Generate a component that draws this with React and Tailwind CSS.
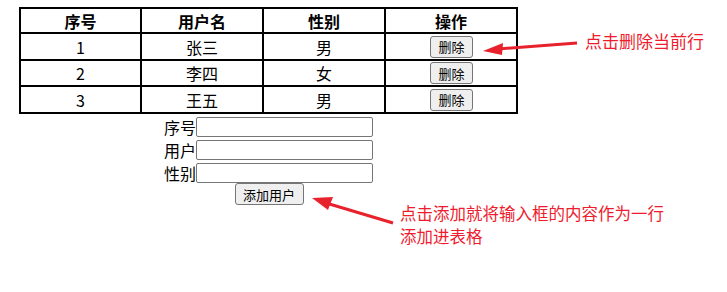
import React from "react";

const rows = [
  { id: 1, name: "张三", sex: "男" },
  { id: 2, name: "李四", sex: "女" },
  { id: 3, name: "王五", sex: "男" },
];

const font = { fontFamily: '"Noto Sans CJK SC", "Noto Sans", sans-serif' };

function Btn({ children, className = "" }) {
  return (
    <button
      className={
        "bg-[#efefef] border border-[#767676] rounded-[3px] text-[13px] leading-none text-black flex items-center justify-center " +
        className
      }
      style={font}
    >
      {children}
    </button>
  );
}

export default function App() {
  return (
    <div className="relative w-[727px] h-[292px] bg-white text-black" style={font}>
      <div className="pt-[7px] pl-[19px]">
        <table className="w-[499px] border-collapse border-2 border-black text-[16px] leading-none">
          <thead>
            <tr className="h-[25px]">
              <th className="border-2 border-black w-[121px] font-bold">序号</th>
              <th className="border-2 border-black w-[122px] font-bold">用户名</th>
              <th className="border-2 border-black w-[122px] font-bold">性别</th>
              <th className="border-2 border-black font-bold">操作</th>
            </tr>
          </thead>
          <tbody>
            {rows.map((r, i) => (
              <tr key={r.id} className={i === 1 ? "h-[26px]" : "h-[27px]"}>
                <td className="border-2 border-black text-center font-normal">{r.id}</td>
                <td className="border-2 border-black text-center">{r.name}</td>
                <td className="border-2 border-black text-center">{r.sex}</td>
                <td className="border-2 border-black">
                  <div className="flex justify-center pl-[1px]">
                    <Btn className="w-[43px] h-[22px]">删除</Btn>
                  </div>
                </td>
              </tr>
            ))}
          </tbody>
        </table>

        <div className="w-[499px] flex flex-col items-center pt-[1px]">
          {["序号", "用户", "性别"].map((l) => (
            <div key={l} className="flex items-center h-[23px]">
              <span className="text-[16px] leading-none">{l}</span>
              <input className="w-[177px] h-[20px] border border-[#767676] rounded-[2px] bg-white" />
            </div>
          ))}
          <Btn className="w-[69px] h-[22px] -mt-[1px] ml-[1px]">添加用户</Btn>
        </div>
      </div>

      {/* annotations */}
      <svg className="absolute left-0 top-0" width="727" height="292">
        <line x1="577" y1="43" x2="498" y2="49" stroke="#e8222c" strokeWidth="3" />
        <polygon points="483,51 503,43 502,55" fill="#e8222c" />
        <line x1="393" y1="223" x2="326" y2="203" stroke="#e8222c" strokeWidth="3" />
        <polygon points="312,198 333,197 328,210" fill="#e8222c" />
      </svg>
      <div className="absolute left-[585px] top-[31px] text-[17px] leading-[20px] text-[#ee1c2e] whitespace-nowrap">
        点击删除当前行
      </div>
      <div className="absolute left-[400px] top-[202px] text-[16.5px] leading-[23px] text-[#ee1c2e] whitespace-nowrap">
        点击添加就将输入框的内容作为一行
        <br />
        添加进表格
      </div>
    </div>
  );
}
